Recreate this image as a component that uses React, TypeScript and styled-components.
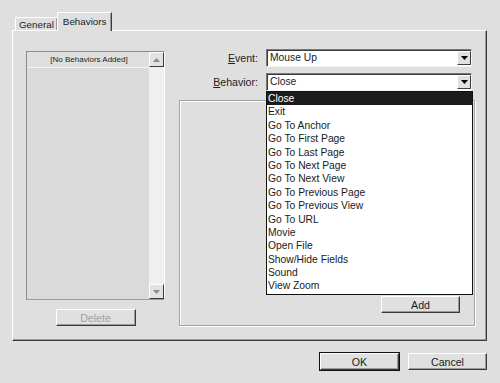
import React from "react";
import styled, { createGlobalStyle } from "styled-components";

const GlobalStyle = createGlobalStyle`
  html, body {
    margin: 0;
    padding: 0;
    background: #dfdfdf;
  }
  body {
    font-family: "Liberation Sans", Arial, sans-serif;
    font-size: 10.2px;
    color: #1a1a1a;
  }
`;

const behaviors = [
  "Close",
  "Exit",
  "Go To Anchor",
  "Go To First Page",
  "Go To Last Page",
  "Go To Next Page",
  "Go To Next View",
  "Go To Previous Page",
  "Go To Previous View",
  "Go To URL",
  "Movie",
  "Open File",
  "Show/Hide Fields",
  "Sound",
  "View Zoom",
];

function Arrow({ up }: { up?: boolean }) {
  return (
    <svg width="7" height="4" viewBox="0 0 7 4">
      <path d={up ? "M0 4 L3.5 0 L7 4 Z" : "M0 0 L7 0 L3.5 4 Z"} fill="currentColor" />
    </svg>
  );
}

function App() {
  return (
    <>
      <GlobalStyle />
      <Dialog>
        <TabStrip>
          <Tab>General</Tab>
          <Tab $active>Behaviors</Tab>
        </TabStrip>
        <Panel>
          <LeftColumn>
            <ListBox>
              <ListMain>
                <ListHeader>[No Behaviors Added]</ListHeader>
                <ListBody />
              </ListMain>
              <ScrollBar>
                <ScrollButton $dim>
                  <Arrow up />
                </ScrollButton>
                <ScrollTrack />
                <ScrollButton $dim>
                  <Arrow />
                </ScrollButton>
              </ScrollBar>
            </ListBox>
            <Button $disabled $width={80}>
              Delete
            </Button>
          </LeftColumn>
          <RightColumn>
            <FieldRow>
              <Label>
                <u>E</u>vent:
              </Label>
              <Combo>
                <ComboValue>Mouse Up</ComboValue>
                <ComboButton>
                  <Arrow />
                </ComboButton>
              </Combo>
            </FieldRow>
            <FieldRow>
              <Label>
                <u>B</u>ehavior:
              </Label>
              <Combo>
                <ComboValue>Close</ComboValue>
                <ComboButton>
                  <Arrow />
                </ComboButton>
              </Combo>
            </FieldRow>
            <GroupBox>
              <Button $width={79}>Add</Button>
            </GroupBox>
            <DropList>
              {behaviors.map((b, i) => (
                <DropItem key={b} $selected={i === 0}>
                  {b}
                </DropItem>
              ))}
            </DropList>
          </RightColumn>
        </Panel>
        <Footer>
          <Button $width={79} $default>
            OK
          </Button>
          <Button $width={79}>Cancel</Button>
        </Footer>
      </Dialog>
    </>
  );
}

const Dialog = styled.div`
  width: 500px;
  height: 383px;
  padding-top: 12px;
  box-sizing: border-box;
  background: #dfdfdf;
`;

const TabStrip = styled.div`
  display: flex;
  align-items: flex-end;
  height: 18px;
  padding-left: 15px;
  position: relative;
  z-index: 2;
`;

const Tab = styled.div<{ $active?: boolean }>`
  height: ${(p) => (p.$active ? "19px" : "13px")};
  padding: ${(p) => (p.$active ? "3px 5px 0 5px" : "1px 3px 0 3px")};
  margin-bottom: ${(p) => (p.$active ? "-1px" : "0")};
  margin-left: ${(p) => (p.$active ? "-1px" : "0")};
  box-sizing: border-box;
  background: #dfdfdf;
  border-top: 1px solid #fff;
  border-left: 1px solid #fff;
  border-right: 1px solid #3c3c3c;
  box-shadow: inset -1px 0 0 #9a9a9a;
  font-size: 9.8px;
  line-height: 11px;
  color: #222;
`;

const Panel = styled.div`
  margin: 0 13px 0 12px;
  height: 311px;
  box-sizing: border-box;
  border-top: 1px solid #fff;
  border-left: 1px solid #fff;
  border-right: 1px solid #3a3a3a;
  border-bottom: 1px solid #3a3a3a;
  box-shadow: inset -1px -1px 0 #9c9c9c;
  display: flex;
  align-items: flex-start;
  gap: 14px;
  padding: 18px 0 0 13px;
`;

const LeftColumn = styled.div`
  width: 139px;
  margin-top: 2px;
  display: flex;
  flex-direction: column;
  align-items: center;
  gap: 9px;
`;

const ListBox = styled.div`
  width: 139px;
  height: 249px;
  box-sizing: border-box;
  display: flex;
  border-top: 1px solid #8c8c8c;
  border-left: 1px solid #8c8c8c;
  border-bottom: 1px solid #9a9a9a;
  border-right: 1px solid #fff;
`;

const ListMain = styled.div`
  flex: 1;
  display: flex;
  flex-direction: column;
  background: #dadada;
`;

const ListHeader = styled.div`
  height: 15px;
  line-height: 15px;
  text-align: center;
  font-size: 8px;
  background: #dfdfdf;
  border-bottom: 1px solid #f4f4f4;
  padding-left: 2px;
  color: #222;
`;

const ListBody = styled.div`
  flex: 1;
`;

const ScrollBar = styled.div`
  width: 15px;
  display: flex;
  flex-direction: column;
  background: #efefef;
`;

const ScrollButton = styled.div<{ $dim?: boolean }>`
  height: 15px;
  box-sizing: border-box;
  display: flex;
  align-items: center;
  justify-content: center;
  background: #e2e2e2;
  color: ${(p) => (p.$dim ? "#8a8a8a" : "#000")};
  border-top: 1px solid #fff;
  border-left: 1px solid #fff;
  border-right: 1px solid #3a3a3a;
  border-bottom: 1px solid #3a3a3a;
`;

const ScrollTrack = styled.div`
  flex: 1;
`;

const RightColumn = styled.div`
  position: relative;
  width: 296px;
  display: flex;
  flex-direction: column;
  gap: 6px;
`;

const FieldRow = styled.div`
  display: flex;
  align-items: center;
  gap: 8px;
  height: 18px;
`;

const Label = styled.div`
  width: 79px;
  text-align: right;
  font-size: 10.6px;
  color: #222;
  u {
    text-decoration-thickness: 1px;
  }
`;

const Combo = styled.div`
  width: 206px;
  height: 18px;
  box-sizing: border-box;
  display: flex;
  background: #fff;
  border-top: 1px solid #7a7a7a;
  border-left: 1px solid #7a7a7a;
  border-bottom: 1px solid #f6f6f6;
  border-right: 1px solid #f6f6f6;
  box-shadow: inset 1px 1px 0 #3a3a3a;
`;

const ComboValue = styled.div`
  flex: 1;
  padding-left: 3px;
  line-height: 16px;
  font-size: 10.3px;
`;

const ComboButton = styled.div`
  width: 14px;
  margin: 1px 0 1px 0;
  box-sizing: border-box;
  display: flex;
  align-items: center;
  justify-content: center;
  background: #e0e0e0;
  color: #000;
  border-top: 1px solid #fff;
  border-left: 1px solid #fff;
  border-right: 1px solid #404040;
  border-bottom: 1px solid #404040;
`;

const GroupBox = styled.div`
  margin-top: 3px;
  height: 226px;
  box-sizing: border-box;
  border: 1px solid #a4a4a4;
  box-shadow: inset 1px 1px 0 #fff, 1px 1px 0 #fff;
  display: flex;
  align-items: flex-end;
  justify-content: flex-end;
  padding: 0 14px 12px 0;
`;

const Button = styled.div<{ $width: number; $disabled?: boolean; $default?: boolean }>`
  width: ${(p) => p.$width}px;
  height: 17px;
  box-sizing: border-box;
  display: flex;
  align-items: center;
  justify-content: center;
  background: #e0e0e0;
  font-size: 10.6px;
  color: ${(p) => (p.$disabled ? "#a0a0a0" : "#1a1a1a")};
  border-top: 1px solid #fff;
  border-left: 1px solid #fff;
  border-right: 1px solid #3a3a3a;
  border-bottom: 1px solid #3a3a3a;
  box-shadow: ${(p) =>
    p.$default
      ? "0 0 0 1px #111, inset -1px -1px 0 #9a9a9a"
      : "inset -1px -1px 0 #9a9a9a"};
`;

const DropList = styled.div`
  position: absolute;
  left: 87px;
  top: 42px;
  width: 207px;
  height: 204px;
  box-sizing: border-box;
  background: #fff;
  border: 1px solid #111;
  display: flex;
  flex-direction: column;
  z-index: 3;
`;

const DropItem = styled.div<{ $selected?: boolean }>`
  height: 13.4px;
  line-height: 13.4px;
  padding-left: 1px;
  font-size: 10.3px;
  background: ${(p) => (p.$selected ? "#1c1c1c" : "transparent")};
  color: ${(p) => (p.$selected ? "#fff" : "#1a1a1a")};
`;

const Footer = styled.div`
  display: flex;
  justify-content: flex-end;
  gap: 9px;
  padding-right: 13px;
  margin-top: 12px;
`;

export default App;
